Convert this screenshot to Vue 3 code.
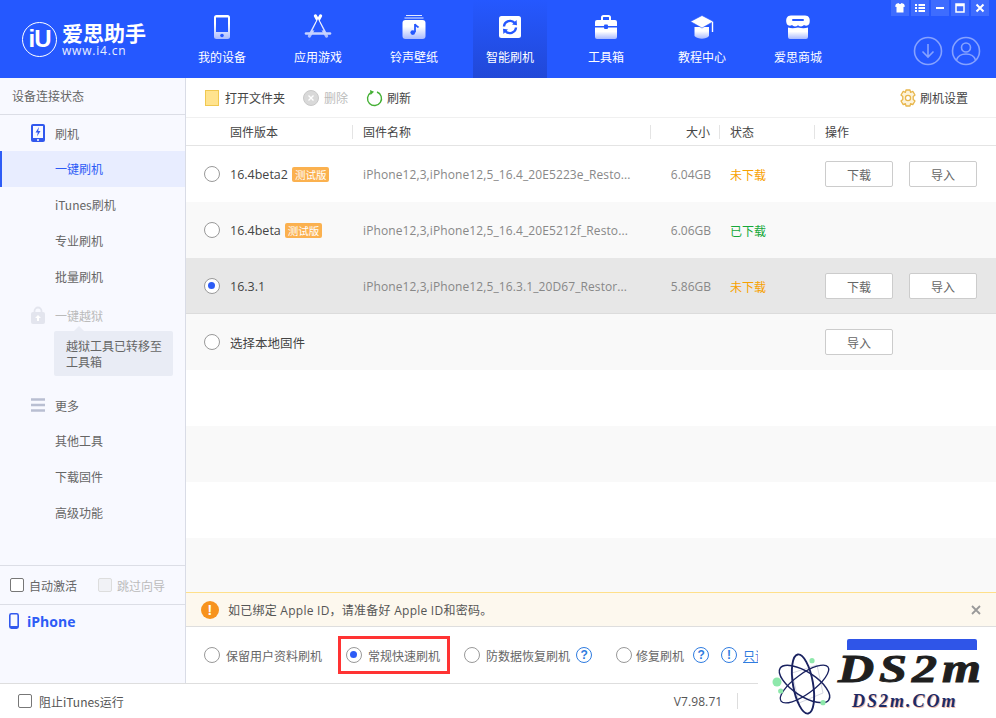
<script setup>
const navItems = [
  { key: 'device', label: '我的设备' },
  { key: 'apps', label: '应用游戏' },
  { key: 'ring', label: '铃声壁纸' },
  { key: 'flash', label: '智能刷机', active: true },
  { key: 'tools', label: '工具箱' },
  { key: 'course', label: '教程中心' },
  { key: 'shop', label: '爱思商城' },
]

const flashMenu = [
  { label: '一键刷机', active: true },
  { label: 'iTunes刷机' },
  { label: '专业刷机' },
  { label: '批量刷机' },
]

const moreMenu = ['其他工具', '下载固件', '高级功能']

const rows = [
  { version: '16.4beta2', beta: true, name: 'iPhone12,3,iPhone12,5_16.4_20E5223e_Resto...', size: '6.04GB', status: '未下载', download: true, imported: true },
  { version: '16.4beta', beta: true, name: 'iPhone12,3,iPhone12,5_16.4_20E5212f_Resto...', size: '6.06GB', status: '已下载', done: true },
  { version: '16.3.1', selected: true, name: 'iPhone12,3,iPhone12,5_16.3.1_20D67_Restor...', size: '5.86GB', status: '未下载', download: true, imported: true },
  { version: '选择本地固件', local: true, imported: true },
  { empty: true },
  { empty: true },
  { empty: true },
  { empty: true },
]
</script>

<template>
  <div class="app">
    <svg class="defs" width="0" height="0">
      <defs>
        <linearGradient id="navFill" x1="0" y1="0" x2="0" y2="1">
          <stop offset="0.35" stop-color="#ffffff" />
          <stop offset="1" stop-color="#a9bbff" />
        </linearGradient>
      </defs>
    </svg>

    <header class="topbar">
      <div class="logo">
        <div class="logo__mark">iU</div>
        <div class="logo__text">
          <div class="logo__name">爱思助手</div>
          <div class="logo__url">www.i4.cn</div>
        </div>
      </div>
      <nav class="nav">
        <div v-for="item in navItems" :key="item.key" :class="['nav__item', { 'nav__item--active': item.active }]">
          <svg class="nav__icon" viewBox="0 0 28 26">
            <template v-if="item.key === 'device'">
              <rect x="6" y="1" width="16" height="24" rx="2.5" fill="url(#navFill)" />
              <rect x="8" y="3.5" width="12" height="14.5" fill="#2558ff" />
              <circle cx="14" cy="21.5" r="1.8" fill="#2558ff" />
            </template>
            <template v-else-if="item.key === 'apps'">
              <path d="M11.5 2 L22.5 22 M16.5 2 L5.5 22" stroke="url(#navFill)" stroke-width="3.2" stroke-linecap="round" fill="none" />
              <path d="M2 19.5 H26" stroke="#c8d3ff" stroke-width="2.6" stroke-linecap="round" />
              <path d="M14 5 L8.5 16.5 H19.5 Z" fill="#2558ff" />
            </template>
            <template v-else-if="item.key === 'ring'">
              <path d="M6 1.5 H22 M4.5 4 H23.5" stroke="#e4eaff" stroke-width="1" />
              <rect x="2.5" y="6" width="23" height="19" rx="3" fill="url(#navFill)" />
              <path d="M15 10 V18.2 M15 10 C15.5 12 18 12.5 18.5 13.5" stroke="#2558ff" stroke-width="1.8" fill="none" />
              <circle cx="12.8" cy="18.6" r="2.4" fill="#2558ff" />
            </template>
            <template v-else-if="item.key === 'flash'">
              <rect x="3" y="2" width="22" height="22" rx="2.5" fill="#fff" />
              <path d="M8 12.5 A6.2 6.2 0 0 1 18.8 9" stroke="#2558ff" stroke-width="2.4" fill="none" />
              <path d="M20 13.5 A6.2 6.2 0 0 1 9.2 17" stroke="#2558ff" stroke-width="2.4" fill="none" />
              <path d="M16 10.5 L21 11.2 L20.6 6 Z M12 15.5 L7 14.8 L7.4 20 Z" fill="#2558ff" />
            </template>
            <template v-else-if="item.key === 'tools'">
              <path d="M10 6 V3.5 A1.5 1.5 0 0 1 11.5 2 H16.5 A1.5 1.5 0 0 1 18 3.5 V6" stroke="#fff" stroke-width="2" fill="none" />
              <path d="M3 8 A2 2 0 0 1 5 6 H23 A2 2 0 0 1 25 8 V12 H3 Z" fill="#fff" />
              <path d="M3 13.5 H25 V23 A2 2 0 0 1 23 25 H5 A2 2 0 0 1 3 23 Z" fill="url(#navFill)" />
              <rect x="12" y="10.5" width="4" height="4.5" rx="1" fill="#2558ff" />
            </template>
            <template v-else-if="item.key === 'course'">
              <path d="M6.5 13 V22 C10 25.5 18 25.5 21 22 V13 Z" fill="url(#navFill)" />
              <path d="M14 1.5 L25.5 7.5 L14 14 L2.5 7.5 Z" fill="#fff" stroke="#2558ff" stroke-width="0.6" />
              <path d="M24.5 8 V18" stroke="#fff" stroke-width="1.4" />
            </template>
            <template v-else>
              <path d="M7 1.5 H21 C25 1.5 26.5 5 25.5 9 C25 11.5 22 12.5 20 11 C18.5 12.8 16 12.8 14 11.2 C12 12.8 9.5 12.8 8 11 C6 12.5 3 11.5 2.5 9 C1.5 5 3 1.5 7 1.5 Z" fill="#fff" />
              <rect x="8" y="5" width="12" height="2" rx="1" fill="#2558ff" />
              <path d="M4 13.5 C7 14.5 10 14.5 14 13.5 C18 14.5 21 14.5 24 13.5 V23 A2 2 0 0 1 22 25 H6 A2 2 0 0 1 4 23 Z" fill="url(#navFill)" />
            </template>
          </svg>
          <span>{{ item.label }}</span>
        </div>
      </nav>
      <div class="winbar">
        <div class="winbar__btn">
          <svg viewBox="0 0 18 16"><path d="M5 4 L7.5 3 C8 4.2 10 4.2 10.5 3 L13 4 L14 6.5 L12.5 7 V12.5 H5.5 V7 L4 6.5 Z" fill="#fff" /></svg>
        </div>
        <div class="winbar__btn">
          <svg viewBox="0 0 18 16"><path d="M4 4 H6 V6 H4 Z M7.5 4 H14 V6 H7.5 Z M4 7 H6 V9 H4 Z M7.5 7 H14 V9 H7.5 Z M4 10 H6 V12 H4 Z M7.5 10 H14 V12 H7.5 Z" fill="#fff" /></svg>
        </div>
        <div class="winbar__btn">
          <svg viewBox="0 0 18 16"><rect x="5" y="7" width="8" height="2" fill="#fff" /></svg>
        </div>
        <div class="winbar__btn">
          <svg viewBox="0 0 18 16"><path d="M5 4 H13 V12 H5 Z M5 5.5 H13" stroke="#fff" stroke-width="1.5" fill="none" /></svg>
        </div>
        <div class="winbar__btn">
          <svg viewBox="0 0 18 16"><path d="M5.5 4.5 L12.5 11.5 M12.5 4.5 L5.5 11.5" stroke="#fff" stroke-width="2" /></svg>
        </div>
      </div>
      <div class="topbar__round">
        <svg viewBox="0 0 30 30" width="30" height="30">
          <circle cx="15" cy="15" r="13.5" fill="none" stroke="#86a2ff" stroke-width="1.6" />
          <path d="M15 8 V21 M9.5 15.5 L15 21 L20.5 15.5" fill="none" stroke="#86a2ff" stroke-width="1.6" />
        </svg>
        <svg viewBox="0 0 30 30" width="30" height="30">
          <circle cx="15" cy="15" r="13.5" fill="none" stroke="#86a2ff" stroke-width="1.6" />
          <circle cx="15" cy="11.5" r="4.5" fill="none" stroke="#86a2ff" stroke-width="1.6" />
          <path d="M5.5 24 C7 19.5 10.5 18 15 18 C19.5 18 23 19.5 24.5 24" fill="none" stroke="#86a2ff" stroke-width="1.6" />
        </svg>
      </div>
    </header>

    <div class="body">
      <aside class="side">
        <div class="side__status">设备连接状态</div>
        <div class="side__group">
          <svg class="side__icon" viewBox="0 0 14 18" width="14" height="18">
            <rect width="14" height="18" rx="2" fill="#3158ee" />
            <rect x="2" y="2" width="10" height="12" fill="#f8f9ff" />
            <path d="M8 3 L4.5 8.5 H6.8 L6 12.5 L9.5 7 H7.2 Z" fill="#3158ee" />
            <circle cx="7" cy="16" r="1" fill="#fff" />
          </svg>
          刷机
        </div>
        <div v-for="item in flashMenu" :key="item.label" :class="['side__item', { 'side__item--active': item.active }]">{{ item.label }}</div>
        <div class="side__group side__group--off">
          <svg class="side__icon" viewBox="0 0 14 18" width="14" height="18">
            <path d="M3.5 8 V5 A3.5 3.5 0 0 1 10.5 5 V8" fill="none" stroke="#e3e5ee" stroke-width="1.8" />
            <rect y="6" width="14" height="12" rx="2" fill="#e3e5ee" />
            <path d="M7 9 L10 12 H8 V15 H6 V12 H4 Z" fill="#fff" />
          </svg>
          一键越狱
        </div>
        <div class="side__tip">越狱工具已转移至工具箱</div>
        <div class="side__group side__group--more">
          <svg class="side__icon" viewBox="0 0 14 14" width="14" height="14">
            <path d="M0 1.5 H14 M0 7 H14 M0 12.5 H14" stroke="#b9bfd2" stroke-width="2.4" />
          </svg>
          更多
        </div>
        <div v-for="label in moreMenu" :key="label" class="side__item">{{ label }}</div>
        <div class="side__checks">
          <label class="check"><i class="check__box"></i>自动激活</label>
          <label class="check check--off"><i class="check__box"></i>跳过向导</label>
        </div>
        <div class="side__device">
          <svg viewBox="0 0 10 16" width="10" height="16">
            <rect x="0.8" y="0.8" width="8.4" height="14.4" rx="1.6" fill="none" stroke="#3158ee" stroke-width="1.6" />
            <path d="M1 13 H9 V15 H1 Z" fill="#3158ee" />
          </svg>
          <span>iPhone</span>
        </div>
      </aside>

      <main class="main">
        <div class="tools">
          <div class="tools__btn">
            <i class="folder"></i>打开文件夹
          </div>
          <div class="tools__btn tools__btn--off">
            <svg viewBox="0 0 16 16" width="16" height="16">
              <circle cx="8" cy="8" r="7.5" fill="#d9d9d9" stroke="#c8c8c8" />
              <path d="M5.5 5.5 L10.5 10.5 M10.5 5.5 L5.5 10.5" stroke="#fff" stroke-width="1.4" />
            </svg>
            删除
          </div>
          <div class="tools__btn tools__btn--refresh">
            <svg viewBox="0 0 18 18" width="18" height="18">
              <path d="M5.8 3.6 A7 7 0 1 0 12 3" fill="none" stroke="#45b035" stroke-width="1.4" />
              <path d="M5 1 L9 2.8 L5.6 6 Z" fill="#45b035" />
            </svg>
            刷新
          </div>
          <div class="tools__btn tools__btn--right">
            <svg viewBox="0 0 18 18" width="18" height="18">
              <path d="M7 1 H11 L11.6 3.4 L13.8 2.4 L16 6 L14.2 7.6 V10.4 L16 12 L13.8 15.6 L11.6 14.6 L11 17 H7 L6.4 14.6 L4.2 15.6 L2 12 L3.8 10.4 V7.6 L2 6 L4.2 2.4 L6.4 3.4 Z" fill="#fdf3da" stroke="#e8b64c" stroke-width="1.3" stroke-linejoin="round" />
              <circle cx="9" cy="9" r="2.6" fill="#fff" stroke="#e8b64c" stroke-width="1.3" />
            </svg>
            刷机设置
          </div>
        </div>

        <div class="thead">
          <div class="thead__cell">固件版本</div>
          <div class="thead__cell">固件名称</div>
          <div class="thead__cell thead__cell--size">大小</div>
          <div class="thead__cell">状态</div>
          <div class="thead__cell">操作</div>
        </div>

        <div class="rows">
          <div v-for="(row, index) in rows" :key="index" :class="['row', { 'row--selected': row.selected }]">
            <template v-if="!row.empty">
              <div class="row__version">
                <i :class="['radio', { 'radio--on': row.selected }]"></i>
                <span>{{ row.version }}</span>
                <em v-if="row.beta" class="tag">测试版</em>
              </div>
              <div class="row__name">{{ row.name }}</div>
              <div class="row__size">{{ row.size }}</div>
              <div :class="['row__status', { 'row__status--done': row.done }]">{{ row.status }}</div>
              <div class="row__ops">
                <button v-if="row.download" class="btn">下载</button>
                <button v-if="row.imported" class="btn">导入</button>
              </div>
            </template>
          </div>
        </div>

        <div class="notice">
          <i class="notice__icon">!</i>
          <span>如已绑定 Apple ID，请准备好 Apple ID和密码。</span>
          <svg class="notice__close" viewBox="0 0 10 10" width="10" height="10">
            <path d="M1 1 L9 9 M9 1 L1 9" stroke="#999" stroke-width="1.8" />
          </svg>
        </div>

        <div class="modes">
          <div class="mode"><i class="radio"></i>保留用户资料刷机</div>
          <div class="mode mode--marked"><i class="radio radio--on"></i>常规快速刷机</div>
          <div class="mode">
            <i class="radio"></i>防数据恢复刷机
            <i class="hint">?</i>
          </div>
          <div class="mode mode--repair">
            <i class="radio"></i>修复刷机
            <i class="hint hint--repair">?</i>
            <i class="hint hint--info">!</i>
            <a class="mode__link">只读</a>
          </div>
          <button class="start">开始刷机</button>
        </div>
      </main>
    </div>

    <footer class="foot">
      <label class="check"><i class="check__box"></i>阻止iTunes运行</label>
      <span class="foot__version">V7.98.71</span>
      <i class="foot__line"></i>
    </footer>

    <div class="mark">
      <svg class="mark__atom" viewBox="0 0 64 66" width="64" height="66">
        <path d="M17 20 L42 12 L48 40 L24 50 Z" fill="none" stroke="#d5d7e2" stroke-width="1" />
        <ellipse cx="29.5" cy="31" rx="29" ry="12" transform="rotate(33 29.5 31)" fill="none" stroke="#1a2260" stroke-width="1.5" />
        <ellipse cx="29.5" cy="31" rx="29" ry="10" transform="rotate(-36 29.5 31)" fill="none" stroke="#1a2260" stroke-width="1.3" />
        <ellipse cx="28" cy="31" rx="10" ry="30" transform="rotate(-10 28 31)" fill="none" stroke="#1a2260" stroke-width="1.9" />
        <circle cx="2" cy="29" r="4.5" fill="#8ee8ab" />
        <circle cx="5.7" cy="38" r="2.6" fill="#8ee8ab" />
        <circle cx="37" cy="7.7" r="2.6" fill="#8ee8ab" />
        <circle cx="48" cy="49.7" r="2.6" fill="#8ee8ab" />
      </svg>
      <div class="mark__text">
        <div class="mark__big">DS2m</div>
        <div class="mark__small">DS2m.COm</div>
      </div>
    </div>
  </div>
</template>

<style>
html,
body {
  margin: 0;
  background: #fff;
}
</style>

<style scoped>
.app {
  position: relative;
  width: 996px;
  height: 718px;
  overflow: hidden;
  display: flex;
  flex-direction: column;
  font-family: "Open Sans", "Noto Sans CJK SC", sans-serif;
  font-size: 12px;
  color: #555;
  background: #fff;
}

.defs {
  position: absolute;
}

i,
em {
  font-style: normal;
}

/* Top bar */
.topbar {
  position: relative;
  flex: 0 0 78px;
  display: flex;
  background: #2558ff;
  color: #fff;
}

.logo {
  flex: 0 0 185px;
  display: flex;
  align-items: center;
  padding-left: 22px;
  box-sizing: border-box;
  gap: 5px;
}

.logo__mark {
  width: 35px;
  height: 35px;
  border: 1.5px solid #fff;
  border-radius: 50%;
  font: bold 24px/32px "Liberation Sans", sans-serif;
  letter-spacing: -1px;
  text-align: center;
  box-sizing: border-box;
}

.logo__name {
  font: bold 21px/24px "Noto Sans CJK SC", sans-serif;
  width: 86px;
  white-space: nowrap;
}

.logo__url {
  font: 12px/14px "Open Sans", sans-serif;
  letter-spacing: 0.8px;
  opacity: 0.9;
}

.nav {
  display: flex;
  gap: 22px;
}

.nav__item {
  width: 74px;
  display: flex;
  flex-direction: column;
  align-items: center;
  padding-top: 14px;
  box-sizing: border-box;
  font-family: "Noto Sans CJK SC", sans-serif;
  line-height: 16px;
}

.nav__item--active {
  background: linear-gradient(#2558ff, #2148d8);
}

.nav__icon {
  width: 28px;
  height: 26px;
  margin-bottom: 9px;
}

.winbar {
  position: absolute;
  top: 0;
  right: 7px;
  display: flex;
  gap: 2px;
}

.winbar__btn {
  width: 18px;
  height: 16px;
  background: #3e6cff;
}

.winbar__btn svg {
  display: block;
}

.topbar__round {
  position: absolute;
  top: 36px;
  right: 15px;
  display: flex;
  gap: 8px;
}

/* Layout */
.body {
  flex: 1;
  display: flex;
  min-height: 0;
}

/* Sidebar */
.side {
  flex: 0 0 186px;
  box-sizing: border-box;
  display: flex;
  flex-direction: column;
  background: #f8f9ff;
  border-right: 1px solid #d9dce6;
  font-family: "Noto Sans CJK SC", sans-serif;
  color: #666;
}

.side__status {
  flex: 0 0 36px;
  line-height: 36px;
  padding-left: 12px;
  border-bottom: 1px solid #dcdee6;
}

.side__group {
  flex: 0 0 36px;
  display: flex;
  align-items: center;
  padding-left: 31px;
  gap: 10px;
}

.side__group--off {
  flex-basis: 40px;
  color: #bbb;
}

.side__group--more {
  margin-top: 11px;
}

.side__icon {
  flex: 0 0 14px;
}

.side__item {
  flex: 0 0 36px;
  line-height: 36px;
  padding-left: 55px;
}

.side__item--active {
  padding-left: 53px;
  color: #2d5cf6;
  background: #e8edff;
  border-left: 2px solid #2d5cf6;
}

.side__tip {
  position: relative;
  margin: -4px 12px 0 54px;
  padding: 7px 10px 5px 12px;
  height: 45px;
  box-sizing: border-box;
  line-height: 16px;
  background: #e9ecf5;
  border-radius: 2px;
  color: #666;
}

.side__tip::before {
  content: "";
  position: absolute;
  top: -5px;
  left: 20px;
  border: 5px solid transparent;
  border-top: 0;
  border-bottom-color: #e9ecf5;
}

.side__checks {
  margin-top: auto;
  flex: 0 0 38px;
  display: flex;
  align-items: center;
  padding-left: 10px;
  gap: 21px;
  border-top: 1px solid #dcdee6;
  border-bottom: 1px solid #dcdee6;
}

.check {
  display: flex;
  align-items: center;
  gap: 5px;
}

.check__box {
  width: 14px;
  height: 14px;
  box-sizing: border-box;
  border: 1px solid #777;
  border-radius: 2px;
  background: #fff;
}

.check--off {
  color: #bbb;
}

.check--off .check__box {
  border-color: #ddd;
  background: #f1f2f6;
}

.side__device {
  flex: 0 0 78px;
  display: flex;
  align-items: flex-start;
  gap: 8px;
  padding: 8px 0 0 9px;
  box-sizing: border-box;
  font: bold 14px/18px "Open Sans", sans-serif;
  color: #2d5cf6;
}

/* Main */
.main {
  flex: 1;
  min-width: 0;
  display: flex;
  flex-direction: column;
}

.tools {
  flex: 0 0 39px;
  display: flex;
  align-items: center;
  padding: 0 28px 0 19px;
  gap: 18px;
  font-family: "Noto Sans CJK SC", sans-serif;
  color: #444;
}

.tools__btn {
  display: flex;
  align-items: center;
  gap: 5px;
}

.tools__btn--off {
  color: #bbb;
}

.tools__btn--refresh {
  margin-left: -1px;
  gap: 4px;
}

.tools__btn--right {
  margin-left: auto;
  gap: 3px;
}

.folder {
  width: 14px;
  height: 16px;
  box-sizing: border-box;
  background: #ffe38e;
  border: 1px solid #f0c850;
  margin-right: 1px;
}

.thead {
  flex: 0 0 29px;
  box-sizing: border-box;
  display: grid;
  grid-template-columns: 166px 298px 69px 95px 1fr;
  align-items: center;
  border-top: 1px solid #f0f0f0;
  border-bottom: 1px solid #e4e4e4;
  font-family: "Noto Sans CJK SC", sans-serif;
  color: #444;
}

.thead__cell {
  height: 14px;
  line-height: 14px;
  padding-left: 10px;
  border-left: 1px solid #e4e4e4;
}

.thead__cell:first-child {
  padding-left: 44px;
  border-left: 0;
}

.thead__cell--size {
  padding: 0 9px 0 0;
  text-align: right;
}

.rows {
  flex: 1;
  display: flex;
  flex-direction: column;
}

.row {
  flex: 0 0 56px;
  box-sizing: border-box;
  display: grid;
  grid-template-columns: 177px 287px 61px 114px 1fr;
  align-items: center;
}

.row:nth-child(even) {
  background: #f9f9f9;
}

.row:last-child {
  flex: 1;
}

.row--selected {
  padding-top: 1px;
  background: #e7e7e7;
  border-bottom: 1px solid #dcdcdc;
}

.row__version {
  display: flex;
  align-items: center;
  padding-left: 18px;
  color: #444;
  font-size: 12.5px;
}

.radio {
  flex: 0 0 16px;
  width: 16px;
  height: 16px;
  margin-right: 10px;
  box-sizing: border-box;
  border: 1.3px solid #999;
  border-radius: 50%;
  background: #fff;
  display: inline-block;
  position: relative;
}

.radio--on::after {
  content: "";
  position: absolute;
  top: 3.2px;
  left: 3.2px;
  width: 7px;
  height: 7px;
  border-radius: 50%;
  background: #2d5cf6;
}

.tag {
  margin-left: 4px;
  padding: 0 3px;
  height: 15px;
  line-height: 15px;
  border-radius: 2px;
  background: #fbb14f;
  color: #fff;
  font: 10.5px/15px "Noto Sans CJK SC", sans-serif;
}

.row__name {
  color: #888;
  white-space: nowrap;
  overflow: hidden;
  letter-spacing: 0.1px;
}

.row__size {
  color: #888;
  text-align: right;
}

.row__status {
  padding-left: 19px;
  color: #f7a100;
  font-family: "Noto Sans CJK SC", sans-serif;
}

.row__status--done {
  color: #16a83a;
}

.row__ops {
  display: flex;
  gap: 16px;
}

.btn {
  width: 68px;
  height: 26px;
  padding: 0;
  background: #fff;
  border: 1px solid #ccc;
  border-radius: 2px;
  color: #666;
  font: 12px "Noto Sans CJK SC", sans-serif;
}

.notice {
  flex: 0 0 35px;
  box-sizing: border-box;
  display: flex;
  align-items: center;
  padding: 0 15px 0 15px;
  background: #fdf8ee;
  border-top: 1px solid #ffe08a;
  border-bottom: 1px solid #dedede;
  color: #555;
  letter-spacing: 0.25px;
}

.notice__icon {
  width: 18px;
  height: 18px;
  margin-right: 9px;
  border-radius: 50%;
  background: #f7931e;
  color: #fff;
  font: bold 14px/18px "Liberation Sans", sans-serif;
  text-align: center;
}

.notice__close {
  margin-left: auto;
}

.modes {
  flex: 0 0 56px;
  position: relative;
  display: flex;
  align-items: center;
  padding-left: 18px;
  font-family: "Noto Sans CJK SC", sans-serif;
  color: #666;
}

.modes .radio {
  margin-right: 6px;
}

.mode {
  display: flex;
  align-items: center;
  margin-right: 24px;
  white-space: nowrap;
}

.mode--marked {
  position: relative;
}

.mode--marked::before {
  content: "";
  position: absolute;
  top: -11px;
  left: -8px;
  width: 112px;
  height: 38px;
  box-sizing: border-box;
  border: 3px solid #f33;
}

.mode--repair .radio {
  margin-right: 4px;
}

.hint {
  width: 16px;
  height: 16px;
  margin-left: 6px;
  box-sizing: border-box;
  border: 1.4px solid #2f7ce0;
  border-radius: 50%;
  color: #2f7ce0;
  font: bold 12px/14px "Liberation Sans", sans-serif;
  text-align: center;
}

.hint--repair {
  margin-left: 9px;
}

.hint--info {
  margin-left: 12px;
}

.mode__link {
  margin-left: 6px;
  width: 15px;
  overflow: hidden;
  color: #2f7ce0;
  text-decoration: underline;
}

.start {
  position: absolute;
  top: 12px;
  right: 19px;
  width: 130px;
  height: 34px;
  border: 0;
  border-radius: 2px;
  background: #2f55e8;
  color: #fff;
  font: 12px "Noto Sans CJK SC", sans-serif;
}

/* Footer */
.foot {
  flex: 0 0 35px;
  box-sizing: border-box;
  display: flex;
  align-items: center;
  padding-left: 18px;
  border-top: 1px solid #dedede;
  font-family: "Noto Sans CJK SC", sans-serif;
  color: #555;
}

.foot .check {
  gap: 7px;
}

.foot__version {
  margin-left: 550px;
  font-family: "Open Sans", sans-serif;
  letter-spacing: 0.1px;
}

.foot__line {
  margin-left: 15px;
  width: 1px;
  height: 16px;
  background: #ddd;
}

/* Site watermark stamped over the corner */
.mark {
  position: absolute;
  left: 758px;
  top: 650px;
  right: 0;
  bottom: 0;
  display: flex;
  background: #fff;
  padding: 3px 0 0 17px;
}

.mark__atom {
  flex: 0 0 64px;
  overflow: visible;
}

.mark__text {
  margin-left: -1px;
}

.mark__big {
  margin-top: -2px;
  font: italic bold 40px/36px "Liberation Serif", serif;
  color: #1f1f1f;
  -webkit-text-stroke: 1px #1f1f1f;
  letter-spacing: 4px;
  transform: scaleX(1.25);
  transform-origin: left;
  width: 120px;
}

.mark__small {
  margin: 4px 0 0 14px;
  font: italic bold 18px/20px "Liberation Serif", serif;
  letter-spacing: 2px;
  color: #1d2a66;
  text-shadow: 1px 1px 0 #f0b9a6;
}
</style>
